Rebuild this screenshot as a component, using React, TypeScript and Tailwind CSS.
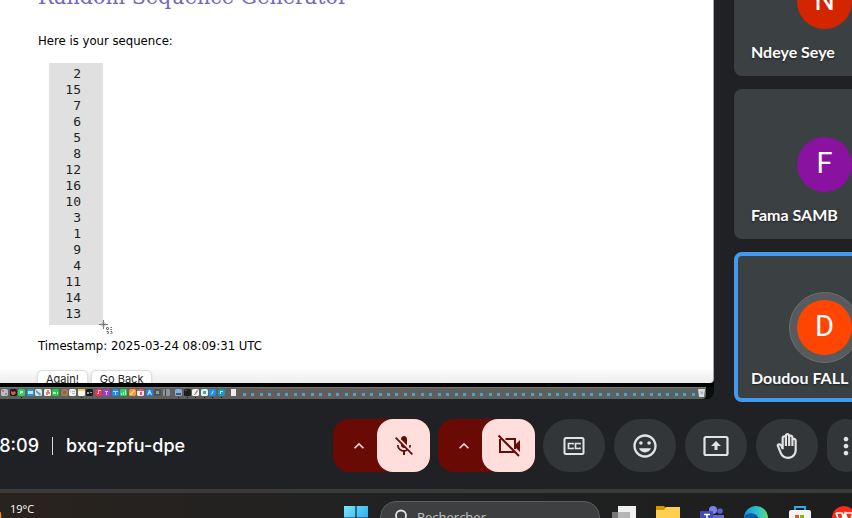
import React from "react";
import {
  MdInsertEmoticon,
  MdKeyboardArrowUp,
  MdMicOff,
  MdMoreVert,
  MdOutlineBackHand,
} from "react-icons/md";

const sequence = [2, 15, 7, 6, 5, 8, 12, 16, 10, 3, 1, 9, 4, 11, 14, 13];

type DockApp = { name: string; base: string; mark: string; shape: string };

const dockApps: DockApp[] = [
  { name: "Launchpad", base: "#b9bdc4", mark: "#d4587a", shape: "M1 1h2v2H1zM4 4h2v2H4z" },
  { name: "Firefox", base: "#2a1038", mark: "#ff7a1a", shape: "M1 2l2 1 2-1 1 2-2 2H2L1 4z" },
  { name: "Messages", base: "#2fd15a", mark: "#f2fff4", shape: "M2 2h3v2H3v1H2z" },
  { name: "Mail", base: "#2497ea", mark: "#eef6ff", shape: "M1 2h5v3H1z" },
  { name: "Maps", base: "#d6ecd8", mark: "#2c86e0", shape: "M1 1l5 4-1 2-4-4z" },
  { name: "Photos", base: "#f5f2ee", mark: "#e0664a", shape: "M3 1h2v2h1v2H4v1H2V3h1z" },
  { name: "FaceTime", base: "#1fce4c", mark: "#f2fff4", shape: "M1 3h3v2H1zM5 3h1v2H5z" },
  { name: "Contacts", base: "#a5794d", mark: "#8a6138", shape: "M2 2h3v3H2z" },
  { name: "Reminders", base: "#f4f4f4", mark: "#9aa8bb", shape: "M1 2h1v1H1zM3 2h3v1H3zM3 4h3v1H3z" },
  { name: "Notes", base: "#f8f6ec", mark: "#f3c73c", shape: "M0 0h7v2H0z" },
  { name: "TV", base: "#17191c", mark: "#c9ccd0", shape: "M1 3h2v2H1zM4 3h2v1H4z" },
  { name: "Music", base: "#f62f54", mark: "#ffe9ee", shape: "M3 1h3v1H4v3H2V4h1z" },
  { name: "Podcasts", base: "#a238d2", mark: "#f0d8fb", shape: "M3 2h1v4H3zM2 2h3v1H2z" },
  { name: "Keynote", base: "#1a8bf0", mark: "#e8f4ff", shape: "M1 2h5v1H4v3H3V3H1z" },
  { name: "Numbers", base: "#25d462", mark: "#effff4", shape: "M1 4h1v2H1zM3 3h1v3H3zM5 1h1v5H5z" },
  { name: "Pages", base: "#ff9524", mark: "#fff2e0", shape: "M5 1l1 1-4 4H1V5z" },
  { name: "Calendar", base: "#ece7e8", mark: "#da3848", shape: "M0 0h7v2H0zM3 3h2v3H3z" },
  { name: "App Store", base: "#1b82ec", mark: "#e9f5ff", shape: "M3 1h1l2 5H5L4 4 2 6H1z" },
  { name: "Settings", base: "#4d5156", mark: "#a7abb0", shape: "M2 2h3v3H2z" },
  { name: "iPhone", base: "#8a9698", mark: "#26292c", shape: "M2 0h1v7H2z" },
];

const openApps: DockApp[] = [
  { name: "Preview", base: "#86aede", mark: "#2e4468", shape: "M1 4h5v2H1z" },
  { name: "Terminal", base: "#1b1d20", mark: "#595d62", shape: "M1 1h2v1H1z" },
  { name: "TextEdit", base: "#f4f4f4", mark: "#5c6068", shape: "M5 1l1 1-3 4H2z" },
  { name: "Chrome", base: "#e6f1ea", mark: "#1999ba", shape: "M2 2h3v3H2z" },
  { name: "Safari", base: "#1b8ff0", mark: "#e6f4ff", shape: "M5 1L4 4 2 6l1-3z" },
  { name: "Edge", base: "#159ac0", mark: "#e6fbff", shape: "M2 2h3v1H3v2H2z" },
];

function DockIcon({ app, running }: { app: DockApp; running?: boolean }) {
  return (
    <svg viewBox="0 0 7 10" className="h-[10px] w-[7px] shrink-0" role="img" aria-label={app.name}>
      <rect width="7" height="7" rx="1.6" fill={app.base} />
      <path d={app.shape} fill={app.mark} opacity="0.8" />
      {running && <rect x="3" y="8" width="1" height="1" fill="#111" />}
    </svg>
  );
}

function Dock() {
  return (
    <div className="flex h-[12px] w-full items-start bg-[#090d0d] pr-2">
      <div className="flex h-[12px] min-w-0 flex-1 items-start overflow-hidden rounded-br-sm border-t border-[#747876] bg-linear-to-r from-[#59635d] via-[#635d5a] via-35% to-[#586360] pt-px pr-px pl-px">
        <div className="flex w-[169px] shrink-0 justify-between">
          {dockApps.map((app) => (
            <DockIcon key={app.name} app={app} running={app.name === "Messages" || app.name === "Notes"} />
          ))}
        </div>
        <div className="ml-[5px] flex w-[50px] shrink-0 justify-between">
          {openApps.map((app) => (
            <DockIcon key={app.name} app={app} running />
          ))}
        </div>
        <span className="ml-[6px] h-[7px] w-[5px] shrink-0 bg-[#ececea]" />
        <div className="flex min-w-0 flex-1 items-center justify-between pt-[4px] pr-[3px] pl-[7px]">
          {Array.from({ length: 54 }, (_, i) => (
            <span key={i} className="h-[3px] w-[3px] shrink-0 bg-[#4ba3d0]" />
          ))}
        </div>
        <svg viewBox="0 0 7 8" className="h-[8px] w-[7px] shrink-0" aria-label="Trash" role="img">
          <path d="M0 0h7L6 8H1z" fill="#d9dddc" />
          <path d="M2 2l2 1 1-1v3H3z" fill="#aab0ae" />
        </svg>
      </div>
    </div>
  );
}

function SelectionCursor() {
  return (
    <svg viewBox="0 0 16 16" className="absolute -right-[11px] -bottom-[10px] h-4 w-4" aria-hidden="true">
      <path d="M5.500 1v9M1 5.500h9" stroke="#777" strokeWidth="1" fill="none" />
      <circle cx="5.500" cy="5.500" r="2" stroke="#999" strokeWidth="0.700" fill="none" />
      <path d="M8.500 8.500h2v2h-2zM12.500 8.500h2M12.500 10.500h2M8.500 12.500h2v2h-2M12.500 12.500h1.500v2h-1.500" fill="none" stroke="#555" strokeWidth="0.900" strokeDasharray="1.500 0.500" />
    </svg>
  );
}

function SharedScreen() {
  return (
    <section className="mb-[3px] flex min-w-0 flex-1 flex-col overflow-hidden rounded-br-lg bg-black">
      <div className="min-h-0 flex-1 overflow-hidden rounded-br border-r border-[#a9a9a9] bg-linear-to-b from-white from-96% to-[#ececec] pl-[38px] font-['DejaVu_Sans_Condensed','DejaVu_Sans',sans-serif] text-[13px] text-black [font-stretch:condensed]">
        <h1 className="-mt-5 font-['DejaVu_Serif_Condensed','DejaVu_Serif',serif] text-[23px] leading-8 text-[#7468bb]">
          Random Sequence Generator
        </h1>
        <p className="mt-[19px] leading-5">Here is your sequence:</p>
        <div className="relative mt-3 ml-[11px] w-[54px] bg-[#e0e0e0] pt-[3px] pr-[22px] pb-[3px]">
          <ol className="text-right font-['DejaVu_Sans_Mono',monospace] text-[13px] leading-4 text-[#222]">
            {sequence.map((n) => (
              <li key={n}>{n}</li>
            ))}
          </ol>
          <SelectionCursor />
        </div>
        <p className="mt-[11px] leading-5">Timestamp: 2025-03-24 08:09:31 UTC</p>
        <div className="mt-[14px] -ml-px flex gap-[3px] font-['Inter',sans-serif] text-[11px] leading-4 text-[#222]">
          <button className="rounded-[5px] border border-[#dedede] bg-white px-2 shadow-sm">Again!</button>
          <button className="rounded-[5px] border border-[#dedede] bg-white px-2 shadow-sm">Go Back</button>
        </div>
      </div>
      <div className="h-[4px] shrink-0 bg-black" />
      <Dock />
    </section>
  );
}

type Person = { name: string; initial: string; color: string; speaking?: boolean };

const people: Person[] = [
  { name: "Ndeye Seye", initial: "N", color: "bg-[#d32600]" },
  { name: "Fama SAMB", initial: "F", color: "bg-[#8a12a0]" },
  { name: "Doudou FALL", initial: "D", color: "bg-[#ff4500]", speaking: true },
];

function Tile({ person }: { person: Person }) {
  return (
    <article className="relative flex h-[150px] w-[181px] shrink-0 items-center justify-center rounded-lg bg-[#3b4042]">
      <div
        className={
          person.speaking
            ? "rounded-full border border-[#6c6f72] bg-[#585b5e] p-[7px]"
            : "rounded-full"
        }
      >
        <div
          className={`flex h-[55px] w-[55px] items-center justify-center rounded-full font-['Roboto',sans-serif] text-[29px] text-white ${person.color}`}
        >
          {person.initial}
        </div>
      </div>
      <span className="absolute bottom-3 left-[17px] text-base leading-6 font-bold whitespace-nowrap text-white [text-shadow:0_1px_2px_rgba(0,0,0,0.6)]">
        {person.name}
      </span>
      {person.speaking && <span className="absolute inset-0 rounded-lg border-4 border-[#4299f0]" />}
    </article>
  );
}

function CameraOff() {
  return (
    <svg viewBox="0 0 24 24" className="h-6 w-6" fill="none" stroke="currentColor" strokeWidth="2" aria-hidden="true">
      <path d="M3 5v13h14.500M8.500 5H18v10" />
      <path d="M18 11l5-5v12l-5-5z" fill="currentColor" stroke="none" />
      <path d="M1.500 1.500L22 22" />
    </svg>
  );
}

function Captions() {
  return (
    <svg viewBox="0 0 24 24" className="h-6 w-6" fill="none" stroke="currentColor" aria-hidden="true">
      <rect x="2.500" y="4" width="19" height="16" rx="1.500" strokeWidth="2" />
      <path d="M11 10.500V9.500H6.500v5H11v-1M18 10.500V9.500h-4.500v5H18v-1" strokeWidth="1.700" />
    </svg>
  );
}

function Present() {
  return (
    <svg viewBox="0 0 26 22" className="h-[22px] w-[26px]" fill="none" stroke="currentColor" aria-hidden="true">
      <rect x="1.500" y="2" width="23" height="18" rx="1.500" strokeWidth="2.200" />
      <path d="M13 6l5 5h-3.500v4h-3v-4H8z" fill="currentColor" stroke="none" />
    </svg>
  );
}

function DeviceControl({ label, children }: { label: string; children: React.ReactNode }) {
  return (
    <div className="flex shrink-0 rounded-2xl bg-[#6a0a05]">
      <button aria-label={`${label} options`} className="flex h-[53px] w-[44px] items-center justify-center pl-[7px] text-[#ffdad6]">
        <MdKeyboardArrowUp className="h-5 w-5" />
      </button>
      <button aria-label={label} className="flex h-[53px] w-[53px] items-center justify-center rounded-2xl bg-[#ffdedb] text-[#680b06]">
        {children}
      </button>
    </div>
  );
}

function RoundControl({ label, children }: { label: string; children: React.ReactNode }) {
  return (
    <button aria-label={label} className="flex h-[53px] w-[62px] shrink-0 items-center justify-center rounded-full bg-[#333638] text-[#e3e3e3]">
      {children}
    </button>
  );
}

function CallBar() {
  return (
    <footer className="flex h-[87px] shrink-0 items-center justify-between overflow-hidden text-white">
      <div className="flex items-center font-['Inter',sans-serif] text-lg leading-6 font-medium">
        <time className="flex w-[39px] justify-end overflow-hidden">08:09</time>
        <span className="mr-[13px] ml-[13px] h-[18px] w-px bg-[#dadada]" />
        <span>bxq-zpfu-dpe</span>
      </div>
      <div className="flex w-[519px] shrink-0 gap-2 overflow-hidden">
        <DeviceControl label="Turn on microphone">
          <MdMicOff className="h-6 w-6" />
        </DeviceControl>
        <DeviceControl label="Turn on camera">
          <CameraOff />
        </DeviceControl>
        <div className="flex gap-[9px]">
          <RoundControl label="Turn on captions">
            <Captions />
          </RoundControl>
          <RoundControl label="Send a reaction">
            <MdInsertEmoticon className="h-7 w-7" />
          </RoundControl>
          <RoundControl label="Present now">
            <Present />
          </RoundControl>
          <RoundControl label="Raise hand">
            <MdOutlineBackHand className="h-[26px] w-[26px]" />
          </RoundControl>
          <button aria-label="More options" className="flex h-[53px] w-[38px] shrink-0 items-center justify-center rounded-full bg-[#333638] text-[#e3e3e3]">
            <MdMoreVert className="h-7 w-7" />
          </button>
        </div>
      </div>
    </footer>
  );
}

function TaskIcons() {
  return (
    <div className="flex shrink-0 gap-5 pt-[13px]">
      <svg viewBox="0 0 24 24" className="h-6 w-6" role="img" aria-label="Task view">
        <rect x="6" width="18" height="18" fill="#f0f0f0" />
        <rect y="6" width="18" height="18" fill="#777" />
        <path d="M6 6h12v12H6z" fill="#b5b5b5" />
      </svg>
      <svg viewBox="0 0 24 24" className="h-6 w-6" role="img" aria-label="Files">
        <path d="M0 0h8l2 2v4H0z" fill="#d79600" />
        <path d="M0 4h8l2-3h14v23H0z" fill="#ffd04f" />
      </svg>
      <svg viewBox="0 0 24 24" className="h-6 w-6" role="img" aria-label="Teams">
        <circle cx="13" cy="4" r="4" fill="#7b83eb" />
        <circle cx="20" cy="5" r="2.800" fill="#5b62c9" />
        <path d="M8 9h16v9H8z" fill="#6269d2" />
        <rect y="5" width="13" height="13" rx="1" fill="#444bb3" />
        <path d="M4 8.500h6M7 8.500V15" stroke="#fff" strokeWidth="1.500" />
      </svg>
      <svg viewBox="0 0 24 24" className="h-6 w-6" role="img" aria-label="Edge">
        <defs>
          <linearGradient id="edge">
            <stop offset="0" stopColor="#1794d8" />
            <stop offset="0.600" stopColor="#2cc4cf" />
            <stop offset="1" stopColor="#62dc61" />
          </linearGradient>
        </defs>
        <circle cx="12" cy="12" r="12" fill="url(#edge)" />
        <path d="M0 12c2-6 11-6 14-1-4-1-6 2-5 8H3z" fill="#0a5cae" />
        <path d="M9 15c0-4 3-5 5-4l1 5z" fill="#17324a" />
      </svg>
      <svg viewBox="0 0 24 24" className="h-6 w-6" role="img" aria-label="Store">
        <path d="M7 5V1h10v4" fill="none" stroke="#21b3ec" strokeWidth="1.800" />
        <rect x="1" y="4" width="22" height="19" rx="2" fill="#f4f4f4" />
        <path d="M7 9h4v4H7z" fill="#f25022" />
        <path d="M12 9h4v4h-4z" fill="#7fba00" />
      </svg>
      <svg viewBox="0 0 24 24" className="h-6 w-6" role="img" aria-label="WPS Office">
        <circle cx="12" cy="12" r="12" fill="#fa2b18" />
        <path d="M4 7h6l2 7 2-7h7l-4 12M4 7l4 10 5-10 4 10" fill="none" stroke="#fff" strokeWidth="1.700" />
      </svg>
    </div>
  );
}

function TaskBar() {
  return (
    <nav className="flex h-[29px] shrink-0 items-start overflow-hidden border-t-4 border-[#3a3a3a] bg-linear-to-r from-[#29231e] via-[#202122] via-45% to-[#1e1e1e] font-['Open_Sans','Noto_Sans',sans-serif]">
      <div className="flex w-[344px] shrink-0 pt-2">
        <svg viewBox="0 0 4 16" className="mt-2 h-4 w-1" aria-hidden="true">
          <path d="M0 3q2-1 1 13H0z" fill="#e8892b" />
        </svg>
        <span className="ml-[6px] text-[11px] leading-4 text-white">19°C</span>
      </div>
      <button aria-label="Start" className="mr-3 shrink-0 pt-[13px]">
        <svg viewBox="0 0 24 24" className="h-6 w-6" aria-hidden="true">
          <defs>
            <linearGradient id="start" x2="1" y2="1">
              <stop stopColor="#78e6fc" />
              <stop offset="1" stopColor="#149cf0" />
            </linearGradient>
          </defs>
          <path d="M0 0h11.400v11.400H0zM12.600 0H24v11.400H12.600zM0 12.600h11.400V24H0zM12.600 12.600H24V24H12.600z" fill="url(#start)" />
        </svg>
      </button>
      <label className="mt-2 flex h-8 min-w-0 flex-1 items-center gap-2 rounded-full border border-[#5c5d5f] bg-[#3e3f41] pl-3">
        <svg viewBox="0 0 16 16" className="h-4 w-4 shrink-0" fill="none" stroke="#e6e6e6" strokeWidth="1.800" aria-hidden="true">
          <circle cx="8" cy="6.500" r="5" />
          <path d="M4.500 10.500L1 14.500" />
        </svg>
        <input
          aria-label="Rechercher"
          placeholder="Rechercher"
          className="h-5 w-full min-w-0 bg-transparent text-[13px] leading-5 text-white outline-none placeholder:text-[#c4c4c4]"
        />
      </label>
      <div className="ml-3 flex w-[240px] shrink-0 overflow-hidden">
        <TaskIcons />
      </div>
    </nav>
  );
}

export default function App() {
  return (
    <main className="flex h-screen flex-col overflow-hidden bg-[#202124] font-['Lato','Inter',sans-serif]">
      <div className="flex min-h-0 flex-1">
        <SharedScreen />
        <aside className="ml-5 flex w-[118px] shrink-0 flex-col justify-end gap-[13px] overflow-hidden">
          {people.map((p) => (
            <Tile key={p.name} person={p} />
          ))}
        </aside>
      </div>
      <CallBar />
      <TaskBar />
    </main>
  );
}
